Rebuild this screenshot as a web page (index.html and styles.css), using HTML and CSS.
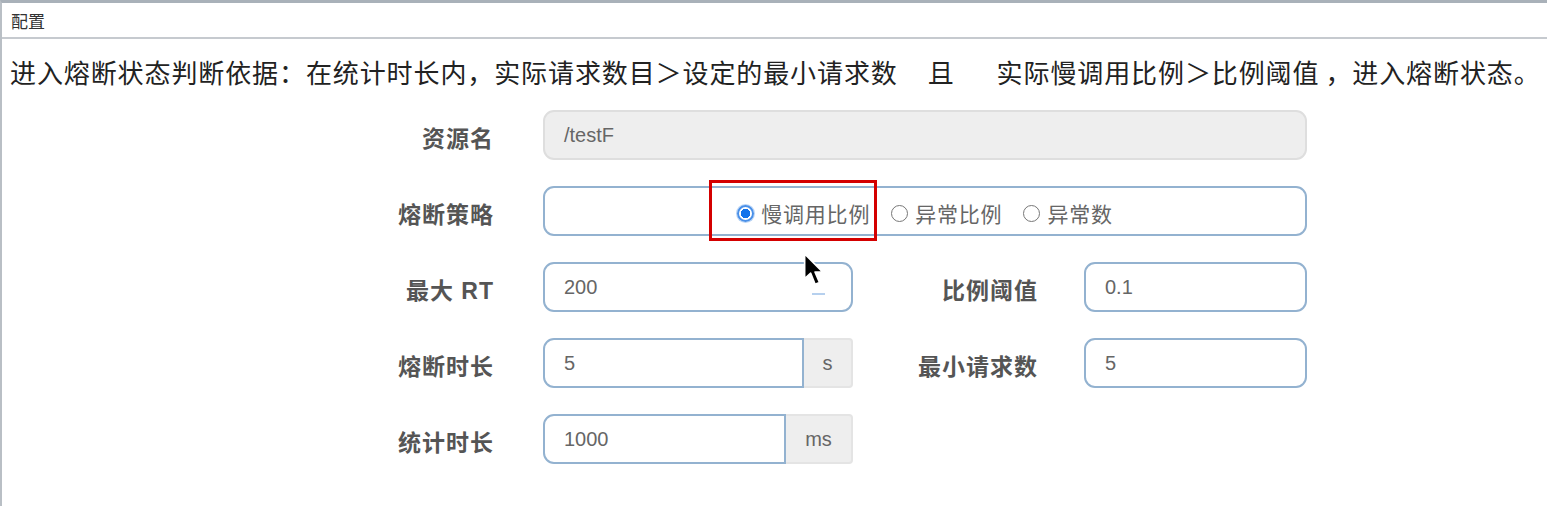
FILE: index.html
```html
<!DOCTYPE html>
<html lang="zh-CN">
<head>
<meta charset="utf-8">
<title>配置</title>
<link rel="stylesheet" href="styles.css">
</head>
<body>
<div class="panel">
  <div class="panel-head">配置</div>
  <div class="desc">进入熔断状态判断依据：在统计时长内，实际请求数目＞设定的最小请求数<span class="gap1"></span>且<span class="gap2"></span>实际慢调用比例＞比例阈值<span class="gap3"></span>，进入熔断状态。</div>
  <form class="form">
    <label class="lbl">资源名</label>
    <div class="field disabled span3">/testF</div>

    <label class="lbl">熔断策略</label>
    <div class="field radios span3">
      <span class="opt"><span class="radio checked"></span>慢调用比例</span>
      <span class="opt"><span class="radio"></span>异常比例</span>
      <span class="opt"><span class="radio"></span>异常数</span>
    </div>

    <label class="lbl">最大 RT</label>
    <div class="field">200</div>
    <label class="lbl lbl2">比例阈值</label>
    <div class="field">0.1</div>

    <label class="lbl">熔断时长</label>
    <div class="group">
      <div class="field in-group">5</div>
      <div class="addon addon-s">s</div>
    </div>
    <label class="lbl lbl2">最小请求数</label>
    <div class="field">5</div>

    <label class="lbl">统计时长</label>
    <div class="group">
      <div class="field in-group">1000</div>
      <div class="addon addon-ms">ms</div>
    </div>
  </form>
  <div class="highlight"></div>
  <div class="spin-mark"></div>
  <svg class="cursor" width="22" height="38" viewBox="0 0 20 34"><path d="M1.5 1.5 L1.5 24 L7 19 L11 29 L15 27.5 L11 18 L18 18 Z" fill="#000" stroke="#fff" stroke-width="1.5" stroke-linejoin="round"/></svg>
</div>
</body>
</html>
```

FILE: styles.css
```css
* { box-sizing: border-box; }
html, body {
  margin: 0;
  padding: 0;
  background: #ffffff;
}
body {
  font-family: "Liberation Sans", "Noto Sans CJK SC", sans-serif;
  color: #555555;
}
.panel {
  position: relative;
  height: 506px;
  border-top: 3px solid #a9b1b9;
  border-left: 2px solid #b9bfc5;
  overflow: hidden;
}
.panel-head {
  height: 36px;
  line-height: 35px;
  padding-left: 9px;
  font-family: "Noto Sans CJK SC", sans-serif;
  font-size: 17px;
  color: #333333;
  border-bottom: 2px solid #c6cacf;
}
.desc {
  margin-top: 15px;
  padding-left: 8px;
  height: 36px;
  line-height: 36px;
  font-family: "Noto Sans CJK SC", serif;
  font-size: 26px;
  letter-spacing: 0.9px;
  color: #222222;
  white-space: nowrap;
}
.gap1 { display: inline-block; width: 30px; }
.gap2 { display: inline-block; width: 42px; }
.gap3 { display: inline-block; width: 6px; }
.form {
  display: grid;
  grid-template-columns: 541px 310px 231px 223px;
  grid-auto-rows: 50px;
  row-gap: 26px;
  margin-top: 20px;
}
.lbl {
  display: flex;
  align-items: center;
  justify-content: flex-end;
  padding-right: 49px;
  padding-top: 4px;
  font-family: "Liberation Sans", "Noto Sans CJK SC", sans-serif;
  font-size: 23px;
  font-weight: bold;
  letter-spacing: 1px;
  color: #555555;
  grid-column: 1;
}
.lbl2 {
  grid-column: 3;
  padding-right: 46px;
}
.span3 { grid-column: 2 / 5; }
.field {
  display: flex;
  align-items: center;
  padding-left: 19px;
  font-size: 20px;
  color: #666666;
  border: 2px solid #93b2d0;
  border-radius: 11px;
  background: #ffffff;
}
.field.disabled {
  background: #eeeeee;
  border-color: #dedede;
}
.radios {
  justify-content: center;
  padding-left: 0;
  padding-top: 4px;
  gap: 21px;
  font-family: "Noto Sans CJK SC", sans-serif;
  font-size: 21px;
  letter-spacing: 0.8px;
  color: #666666;
}
.opt {
  display: inline-flex;
  align-items: center;
  gap: 7px;
}
.radio {
  display: inline-block;
  width: 17px;
  height: 17px;
  border-radius: 50%;
  border: 1.5px solid #777777;
  background: #ffffff;
  flex: none;
}
.radio.checked {
  border: 2px solid #4a90e8;
  background: radial-gradient(circle, #1273eb 0 4.5px, #ffffff 5px);
  box-shadow: 0 0 0 1px #b9d4f5;
}
.group {
  display: flex;
}
.in-group {
  flex: 1;
  border-radius: 11px 0 0 11px;
}
.addon {
  display: flex;
  align-items: center;
  justify-content: center;
  background: #eeeeee;
  border: 2px solid #e4e4e4;
  border-left: none;
  border-radius: 0 4px 4px 0;
  font-size: 20px;
  color: #666666;
}
.addon-s { width: 49px; }
.addon-ms { width: 67px; }
.highlight {
  position: absolute;
  left: 707px;
  top: 177px;
  width: 168px;
  height: 61px;
  border: 3px solid #d40000;
}
.spin-mark {
  position: absolute;
  left: 810px;
  top: 290px;
  width: 13px;
  height: 2px;
  background: #b6d0ee;
}
.cursor {
  position: absolute;
  left: 801px;
  top: 249px;
}
```
